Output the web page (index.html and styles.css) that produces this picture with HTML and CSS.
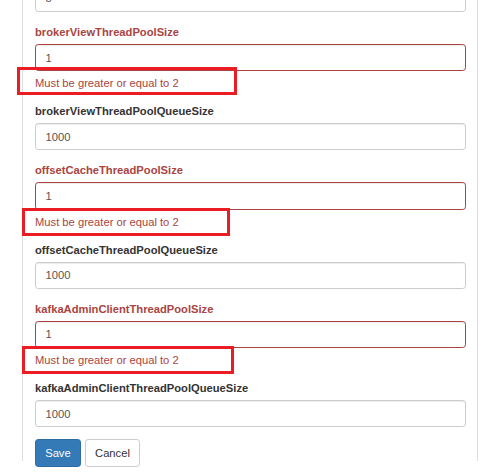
FILE: index.html
```html
<!DOCTYPE html>
<html>
<head>
<meta charset="utf-8">
<link rel="stylesheet" href="styles.css">
</head>
<body>
<div class="panel">
  <form class="form">
    <div class="group first">
      <input class="control" type="text" value="5">
    </div>
    <div class="group has-error">
      <label class="label">brokerViewThreadPoolSize</label>
      <input class="control" type="text" value="1">
      <div class="help">Must be greater or equal to 2</div>
    </div>
    <div class="group">
      <label class="label">brokerViewThreadPoolQueueSize</label>
      <input class="control" type="text" value="1000">
    </div>
    <div class="group has-error">
      <label class="label">offsetCacheThreadPoolSize</label>
      <input class="control" type="text" value="1">
      <div class="help">Must be greater or equal to 2</div>
    </div>
    <div class="group">
      <label class="label">offsetCacheThreadPoolQueueSize</label>
      <input class="control" type="text" value="1000">
    </div>
    <div class="group has-error">
      <label class="label">kafkaAdminClientThreadPoolSize</label>
      <input class="control" type="text" value="1">
      <div class="help">Must be greater or equal to 2</div>
    </div>
    <div class="group">
      <label class="label">kafkaAdminClientThreadPoolQueueSize</label>
      <input class="control" type="text" value="1000">
    </div>
    <div class="actions">
      <button type="button" class="btn btn-primary">Save</button>
      <button type="button" class="btn btn-default">Cancel</button>
    </div>
  </form>
</div>
<div class="mark mark-1"></div>
<div class="mark mark-2"></div>
<div class="mark mark-3"></div>
</body>
</html>
```

FILE: styles.css
```css
html, body {
  margin: 0;
  padding: 0;
  background: #fff;
  height: 100%;
  overflow: hidden;
}
body {
  position: relative;
  font-family: "Liberation Sans", Arial, sans-serif;
  font-size: 11.2px;
  line-height: 16px;
  color: #333;
}
.panel {
  margin-left: 22px;
  width: 456px;
  height: 100%;
  border-left: 1px solid #ddd;
  border-right: 1px solid #ddd;
  padding: 0 11px 0 12px;
  box-sizing: border-box;
}
.form {
  margin-top: -15.2px;
}
.group {
  margin-bottom: 12px;
}
.label {
  display: block;
  font-weight: bold;
  margin-bottom: 4px;
  height: 16px;
}
.control {
  display: block;
  box-sizing: border-box;
  width: 100%;
  height: 27.2px;
  padding: 4.8px 9.6px;
  font-family: "Liberation Sans", Arial, sans-serif;
  font-size: 11.2px;
  line-height: 16px;
  color: #555;
  background: #fff;
  border: 1px solid #ccc;
  border-radius: 3.2px;
  box-shadow: inset 0 1px 1px rgba(0,0,0,.075);
  margin: 0;
}
.has-error .label,
.has-error .help {
  color: #a94442;
}
.has-error .control {
  border-color: #a94442;
}
.help {
  margin-top: 4px;
  height: 16px;
}
.actions {
  display: flex;
  gap: 4px;
}
.btn {
  box-sizing: border-box;
  height: 28px;
  padding: 4.8px 9.2px;
  font-family: "Liberation Sans", Arial, sans-serif;
  font-size: 11.2px;
  line-height: 16px;
  border: 1px solid transparent;
  border-radius: 3.2px;
  margin: 0;
}
.btn-primary {
  background: #337ab7;
  border-color: #2e6da4;
  color: #fff;
}
.btn-default {
  background: #fff;
  border-color: #ccc;
  color: #333;
}
.mark {
  position: absolute;
  border: 3px solid #ec1c24;
  box-sizing: border-box;
}
.mark-1 { left: 17px; top: 67px; width: 220px; height: 28px; }
.mark-2 { left: 22px; top: 208px; width: 208px; height: 28px; }
.mark-3 { left: 22px; top: 346px; width: 212px; height: 28px; }
```
